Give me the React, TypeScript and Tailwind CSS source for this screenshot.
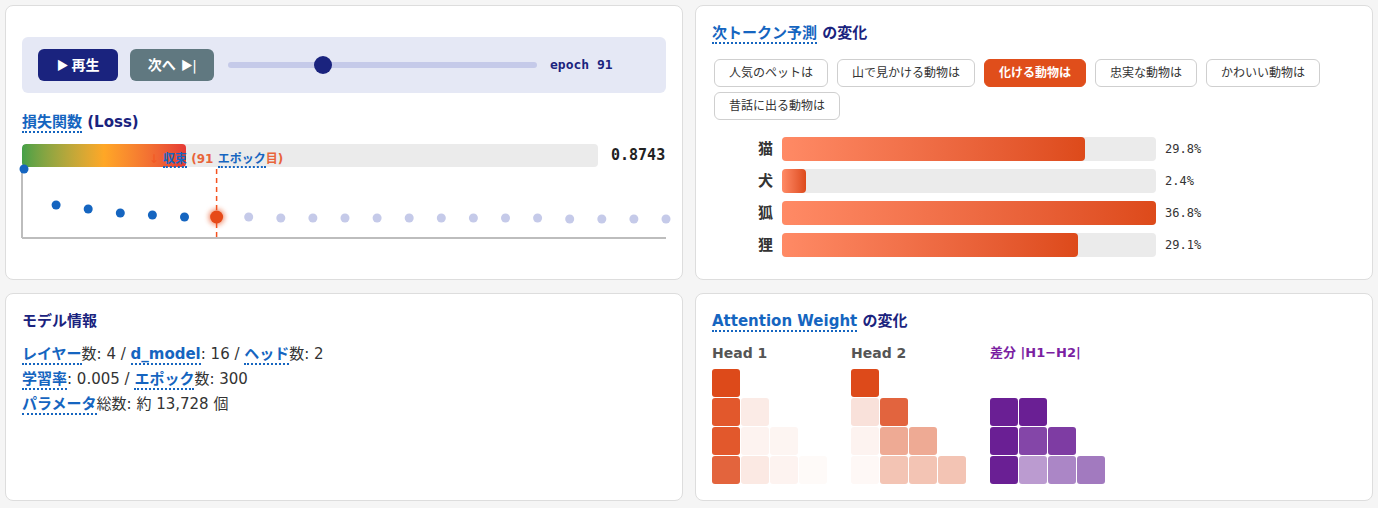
import React from "react";

// Small helper for the dotted-underlined glossary terms
function Term({ children }: { children: React.ReactNode }) {
  return (
    <span className="text-[#1565c0] font-bold border-b-2 border-dotted border-[#1565c0]">
      {children}
    </span>
  );
}

const lossYs = [
  2, 38, 42, 46, 48, 50, 50, 50, 51, 51, 51, 51, 51, 51, 51, 51, 51, 52, 52, 52, 52,
];
const current = 6;

const prompts = [
  "人気のペットは",
  "山で見かける動物は",
  "化ける動物は",
  "忠実な動物は",
  "かわいい動物は",
  "昔話に出る動物は",
];

const preds = [
  { token: "猫", p: 29.8 },
  { token: "犬", p: 2.4 },
  { token: "狐", p: 36.8 },
  { token: "狸", p: 29.1 },
];

const head1 = [
  ["#dd4a1a"],
  ["#e2582c", "#fbebe6"],
  ["#e2582c", "#fdf3f0", "#fdf5f2"],
  ["#e3643d", "#fbe9e3", "#fdf3f0", "#fefaf8"],
];
const head2 = [
  ["#dd4a1a"],
  ["#f9e1da", "#e2643e"],
  ["#fdf3f0", "#eeaa94", "#eeaa94"],
  ["#fef8f6", "#f3c4b4", "#f3c4b4", "#f3c4b4"],
];
const diff = [
  ["#ffffff"],
  ["#6a1f94", "#6a1f94"],
  ["#6a1f94", "#8446a8", "#7e3ca3"],
  ["#6a1f94", "#bb9bd0", "#ab86c6", "#a27abf"],
];

function Heatmap({ rows }: { rows: string[][] }) {
  return (
    <div className="flex flex-col gap-px">
      {rows.map((row, r) => (
        <div key={r} className="flex gap-px">
          {row.map((c, i) => (
            <div
              key={i}
              className="w-[28px] h-[28px] rounded-[3px]"
              style={{ backgroundColor: c }}
            />
          ))}
        </div>
      ))}
    </div>
  );
}

function LossChart() {
  const xs = lossYs.map((_, i) => 2 + i * 32.1);
  return (
    <svg width={644} height={72} className="block overflow-visible">
      <defs>
        <filter id="glow" x="-1" y="-1" width="3" height="3">
          <feGaussianBlur stdDeviation="2.5" />
        </filter>
      </defs>
      <line x1={0} y1={0} x2={0} y2={71} stroke="#bdbdbd" strokeWidth={2} />
      <line x1={0} y1={71} x2={644} y2={71} stroke="#bdbdbd" strokeWidth={2} />
      <line
        x1={xs[current]}
        y1={2}
        x2={xs[current]}
        y2={72}
        stroke="#f4511e"
        strokeWidth={1.5}
        strokeDasharray="5 4"
      />
      {lossYs.map((y, i) => {
        if (i === current) {
          return (
            <g key={i}>
              <circle cx={xs[i]} cy={y} r={8} fill="#e64a19" opacity={0.6} filter="url(#glow)" />
              <circle cx={xs[i]} cy={y} r={6.5} fill="#e64a19" />
            </g>
          );
        }
        return (
          <circle
            key={i}
            cx={xs[i]}
            cy={y}
            r={4.5}
            fill={i < current ? "#1565c0" : "#c5cae9"}
          />
        );
      })}
    </svg>
  );
}

export default function App() {
  return (
    <div className="min-h-screen bg-[#f5f5f5] p-[5px] grid grid-cols-2 gap-x-3 gap-y-[13px] content-start font-['DejaVu_Sans','Noto_Sans_CJK_JP',sans-serif] text-[#333]">
      {/* Training controls + loss */}
      <div className="h-[275px] bg-white border border-[#ddd] rounded-lg px-4 pt-[31px]">
        <div className="h-[56px] bg-[#e5e8f5] rounded-md px-4 flex items-center">
          <button className="w-[80px] h-[32px] rounded-md bg-[#1a237e] text-white text-[14px] font-bold flex items-center justify-center gap-[3px]">
            <span className="font-['Noto_Sans_CJK_JP'] text-[12px]">▶</span>再生
          </button>
          <button className="ml-3 w-[84px] h-[32px] rounded-md bg-[#607880] text-white text-[14px] font-bold flex items-center justify-center gap-[5px]">
            次へ
            <span className="font-['Noto_Sans_CJK_JP'] text-[12px]">▶|</span>
          </button>
          <div className="ml-[14px] w-[309px] relative h-[18px] flex items-center">
            <div className="w-full h-[6px] rounded-full bg-[#c5cae9]" />
            <div className="absolute left-[86px] top-0 w-[18px] h-[18px] rounded-full bg-[#1a237e]" />
          </div>
          <div className="ml-[13px] w-[100px] font-['DejaVu_Sans_Mono',monospace] font-bold text-[13px] text-[#1a237e]">
            epoch 91
          </div>
        </div>

        <h3 className="mt-[18px] text-[15px] leading-[22px] font-bold text-[#1a237e]">
          <Term>損失関数</Term> (Loss)
        </h3>

        <div className="mt-[11px] relative">
          <div className="flex items-center gap-[13px]">
            <div className="w-[576px] h-[23px] rounded bg-[#ebebeb] overflow-hidden">
              <div className="w-[164px] h-full rounded bg-gradient-to-r from-[#43a047] via-[#ffa726] to-[#e53935]" />
            </div>
            <div className="font-['DejaVu_Sans_Mono',monospace] font-bold text-[15px] text-[#222]">
              0.8743
            </div>
          </div>
          <LossChart />
          <div className="absolute left-[194px] top-[8px] -translate-x-1/2 whitespace-nowrap text-[12px] leading-[15px] font-bold text-[#e8643a]">
            <span className="text-[#f4511e] opacity-60">↓</span> <Term>収束</Term> (91 <Term>エポック</Term>目)
          </div>
        </div>
      </div>

      {/* Next token prediction */}
      <div className="h-[275px] bg-white border border-[#ddd] rounded-lg p-4">
        <h3 className="text-[15px] leading-[22px] font-bold text-[#1a237e]">
          <Term>次トークン予測</Term> の変化
        </h3>
        <div className="mt-[15px] ml-[2px] flex flex-wrap gap-x-[9px] gap-y-[5px]">
          {prompts.map((p) => {
            const active = p === "化ける動物は";
            return (
              <button
                key={p}
                className={
                  active
                    ? "h-[28px] px-[14px] rounded-md border border-[#e04e1b] bg-[#e04e1b] text-white font-bold text-[12px]"
                    : "h-[28px] px-[14px] rounded-md border border-[#cfcfcf] bg-white text-[#333] text-[12px]"
                }
              >
                {p}
              </button>
            );
          })}
        </div>
        <div className="mt-[17px] flex flex-col gap-2">
          {preds.map((d) => (
            <div key={d.token} className="flex items-center h-[24px]">
              <div className="w-[61px] text-right text-[15px] font-bold text-[#333]">
                {d.token}
              </div>
              <div className="ml-[9px] w-[374px] h-[24px] rounded bg-[#ebebeb]">
                <div
                  className="h-full rounded bg-gradient-to-r from-[#ff8a65] to-[#dd4a1a]"
                  style={{ width: `${(d.p / 36.8) * 100}%` }}
                />
              </div>
              <div className="ml-[9px] font-['DejaVu_Sans_Mono',monospace] text-[12px] text-[#333]">
                {d.p.toFixed(1)}%
              </div>
            </div>
          ))}
        </div>
      </div>

      {/* Model info */}
      <div className="h-[208px] bg-white border border-[#ddd] rounded-lg p-4">
        <h3 className="text-[15px] leading-[22px] font-bold text-[#1a237e]">モデル情報</h3>
        <div className="mt-[10px] text-[15px] leading-[25px] text-[#333]">
          <div>
            <Term>レイヤー</Term>数: 4 / <Term>d_model</Term>: 16 / <Term>ヘッド</Term>数: 2
          </div>
          <div>
            <Term>学習率</Term>: 0.005 / <Term>エポック</Term>数: 300
          </div>
          <div>
            <Term>パラメータ</Term>総数: 約 13,728 個
          </div>
        </div>
      </div>

      {/* Attention weights */}
      <div className="h-[208px] bg-white border border-[#ddd] rounded-lg p-4">
        <h3 className="text-[15px] leading-[22px] font-bold text-[#1a237e]">
          <Term>Attention Weight</Term> の変化
        </h3>
        <div className="mt-[11px] flex gap-6">
          <div className="w-[115px]">
            <div className="text-[14px] leading-[20px] font-bold text-[#555]">Head 1</div>
            <div className="mt-[6px]">
              <Heatmap rows={head1} />
            </div>
          </div>
          <div className="w-[115px]">
            <div className="text-[14px] leading-[20px] font-bold text-[#555]">Head 2</div>
            <div className="mt-[6px]">
              <Heatmap rows={head2} />
            </div>
          </div>
          <div className="w-[115px]">
            <div className="text-[13px] leading-[20px] font-bold text-[#7b1fa2] whitespace-nowrap">
              差分 |H1−H2|
            </div>
            <div className="mt-[6px]">
              <Heatmap rows={diff} />
            </div>
          </div>
        </div>
      </div>
    </div>
  );
}
